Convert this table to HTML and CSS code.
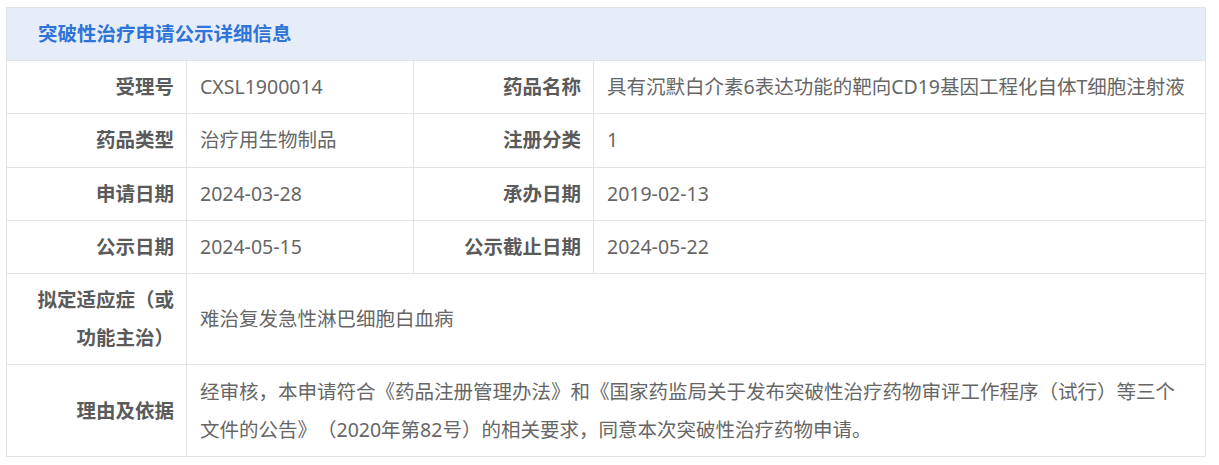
FILE: index.html
```html
<!DOCTYPE html>
<html lang="zh-CN">
<head>
<meta charset="utf-8">
<title>突破性治疗申请公示详细信息</title>
<link rel="stylesheet" href="styles.css">
</head>
<body>
<div class="panel">
  <table class="detail">
    <colgroup>
      <col class="c-label">
      <col class="c-val1">
      <col class="c-label">
      <col class="c-val2">
    </colgroup>
    <thead>
      <tr><th colspan="4" class="title">突破性治疗申请公示详细信息</th></tr>
    </thead>
    <tbody>
      <tr>
        <td class="label">受理号</td>
        <td class="value">CXSL1900014</td>
        <td class="label">药品名称</td>
        <td class="value">具有沉默白介素6表达功能的靶向CD19基因工程化自体T细胞注射液</td>
      </tr>
      <tr>
        <td class="label">药品类型</td>
        <td class="value">治疗用生物制品</td>
        <td class="label">注册分类</td>
        <td class="value">1</td>
      </tr>
      <tr>
        <td class="label">申请日期</td>
        <td class="value">2024-03-28</td>
        <td class="label">承办日期</td>
        <td class="value">2019-02-13</td>
      </tr>
      <tr>
        <td class="label">公示日期</td>
        <td class="value">2024-05-15</td>
        <td class="label">公示截止日期</td>
        <td class="value">2024-05-22</td>
      </tr>
      <tr>
        <td class="label">拟定适应症（或功能主治）</td>
        <td class="value" colspan="3">难治复发急性淋巴细胞白血病</td>
      </tr>
      <tr>
        <td class="label">理由及依据</td>
        <td class="value" colspan="3">经审核，本申请符合《药品注册管理办法》和《国家药监局关于发布突破性治疗药物审评工作程序（试行）等三个文件的公告》（2020年第82号）的相关要求，同意本次突破性治疗药物申请。</td>
      </tr>
    </tbody>
  </table>
</div>
</body>
</html>
```

FILE: styles.css
```css
html, body {
  margin: 0;
  padding: 0;
  background: #ffffff;
}

body {
  font-family: "Noto Sans", "Noto Sans CJK SC", sans-serif;
  font-size: 19.5px;
  color: #666666;
  text-spacing-trim: space-all;
}

.panel {
  padding: 7px 0 0 6px;
}

.detail {
  width: 1200px;
  border-collapse: collapse;
  table-layout: fixed;
}

.c-label { width: 180px; }
.c-val1 { width: 227px; }
.c-val2 { width: auto; }

.detail th,
.detail td {
  border: 1px solid #e3e3e3;
}

.title {
  height: 52px;
  padding: 0 31px;
  background: #e6edf9;
  color: #2f74d8;
  font-weight: 700;
  text-align: left;
  line-height: 24px;
}

.label,
.value {
  line-height: 38px;
  vertical-align: middle;
}

.label {
  padding: 7.15px 12px 7.15px 14px;
  text-align: right;
  font-weight: 700;
  color: #5a5a5a;
}

.value {
  padding: 7.15px 13px;
  text-align: left;
  color: #666666;
}
```
